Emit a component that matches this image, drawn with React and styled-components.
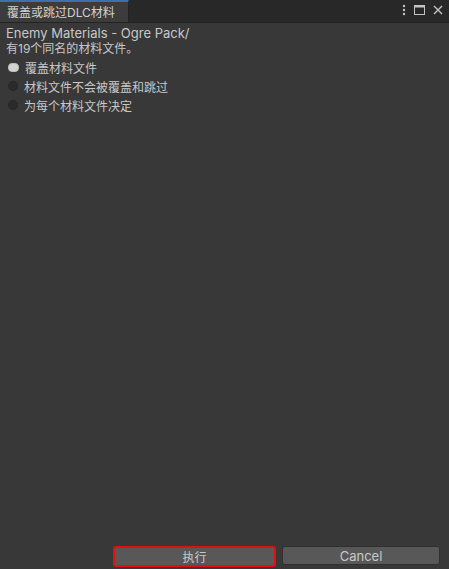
import React, { useState } from 'react'
import styled, { createGlobalStyle } from 'styled-components'

const Global = createGlobalStyle`
  html, body { margin: 0; padding: 0; background: #383838; }
  body { font-family: Inter, "Noto Sans CJK SC", sans-serif; }
`

const Window = styled.div`
  width: 449px;
  height: 569px;
  display: flex;
  flex-direction: column;
  background: #383838;
  color: #c4c4c4;
  font-size: 12px;
  overflow: hidden;
`

const TitleBar = styled.div`
  height: 22px;
  display: flex;
  align-items: stretch;
  background: #282828;
  border-bottom: 1px solid #232323;
`

const Tab = styled.div`
  width: 129px;
  box-sizing: border-box;
  background: #3c3c3c;
  border-top: 2px solid #3a72b0;
  border-right: 1px solid #232323;
  padding: 3px 0 0 7px;
  color: #d2d2d2;
  font-size: 12px;
  line-height: 16px;
`

const Spacer = styled.div`
  flex: 1;
`

const Controls = styled.div`
  display: flex;
  align-items: center;
  gap: 8px;
  padding: 0 6px 2px 0;
`

const Body = styled.div`
  flex: 1;
  padding: 3px 6px 0 6px;
  display: flex;
  flex-direction: column;
`

const Line = styled.div`
  height: 15px;
  line-height: 15px;
  font-size: ${p => (p.$latin ? 13 : 12)}px;
  color: #c8c8c8;
`

const Options = styled.div`
  display: flex;
  flex-direction: column;
  gap: 3px;
  margin-top: 3px;
`

const Option = styled.label`
  display: flex;
  align-items: center;
  gap: 6px;
  height: 16px;
  padding-left: 2px;
  cursor: pointer;
  color: #c8c8c8;
`

const Dot = styled.span`
  width: ${p => (p.$on ? 11 : 10)}px;
  height: ${p => (p.$on ? 9 : 10)}px;
  box-sizing: border-box;
  border-radius: ${p => (p.$on ? '4px' : '50%')};
  background: ${p => (p.$on ? '#d4d4d4' : '#2b2b2b')};
  border: 1px solid ${p => (p.$on ? '#bdbdbd' : '#262626')};
`

const Footer = styled.div`
  display: flex;
  justify-content: flex-end;
  gap: 6px;
  padding: 0 9px 2px 0;
`

const Button = styled.button`
  width: ${p => p.$w}px;
  height: ${p => (p.$focus ? 21 : 19)}px;
  box-sizing: border-box;
  background: #585858;
  color: #c8c8c8;
  border: ${p => (p.$focus ? '2px solid #e01010' : '1px solid #303030')};
  border-radius: 3px;
  font-family: Inter, "Noto Sans CJK SC", sans-serif;
  font-size: ${p => (p.$latin ? 13 : 12)}px;
  padding: 0;
  margin-bottom: ${p => (p.$focus ? 0 : 1)}px;
`

const options = ['覆盖材料文件', '材料文件不会被覆盖和跳过', '为每个材料文件决定']

export default function App() {
  const [sel, setSel] = useState(0)
  return (
    <Window>
      <Global />
      <TitleBar>
        <Tab>覆盖或跳过DLC材料</Tab>
        <Spacer />
        <Controls>
          <svg width="4" height="12" viewBox="0 0 4 12">
            <circle cx="2" cy="2" r="1.2" fill="#c4c4c4" />
            <circle cx="2" cy="6" r="1.2" fill="#c4c4c4" />
            <circle cx="2" cy="10" r="1.2" fill="#c4c4c4" />
          </svg>
          <svg width="11" height="10" viewBox="0 0 11 10">
            <rect x="0.5" y="0.5" width="10" height="9" fill="none" stroke="#c4c4c4" />
            <rect x="0.5" y="0.5" width="10" height="2" fill="#c4c4c4" />
          </svg>
          <svg width="10" height="10" viewBox="0 0 10 10">
            <path d="M1 1 L9 9 M9 1 L1 9" stroke="#c4c4c4" strokeWidth="1.4" />
          </svg>
        </Controls>
      </TitleBar>
      <Body>
        <Line $latin>Enemy Materials - Ogre Pack/</Line>
        <Line>有19个同名的材料文件。</Line>
        <Options>
          {options.map((o, i) => (
            <Option key={i} onClick={() => setSel(i)}>
              <Dot $on={sel === i} />
              {o}
            </Option>
          ))}
        </Options>
      </Body>
      <Footer>
        <Button $w={163} $focus>执行</Button>
        <Button $w={158} $latin>Cancel</Button>
      </Footer>
    </Window>
  )
}
